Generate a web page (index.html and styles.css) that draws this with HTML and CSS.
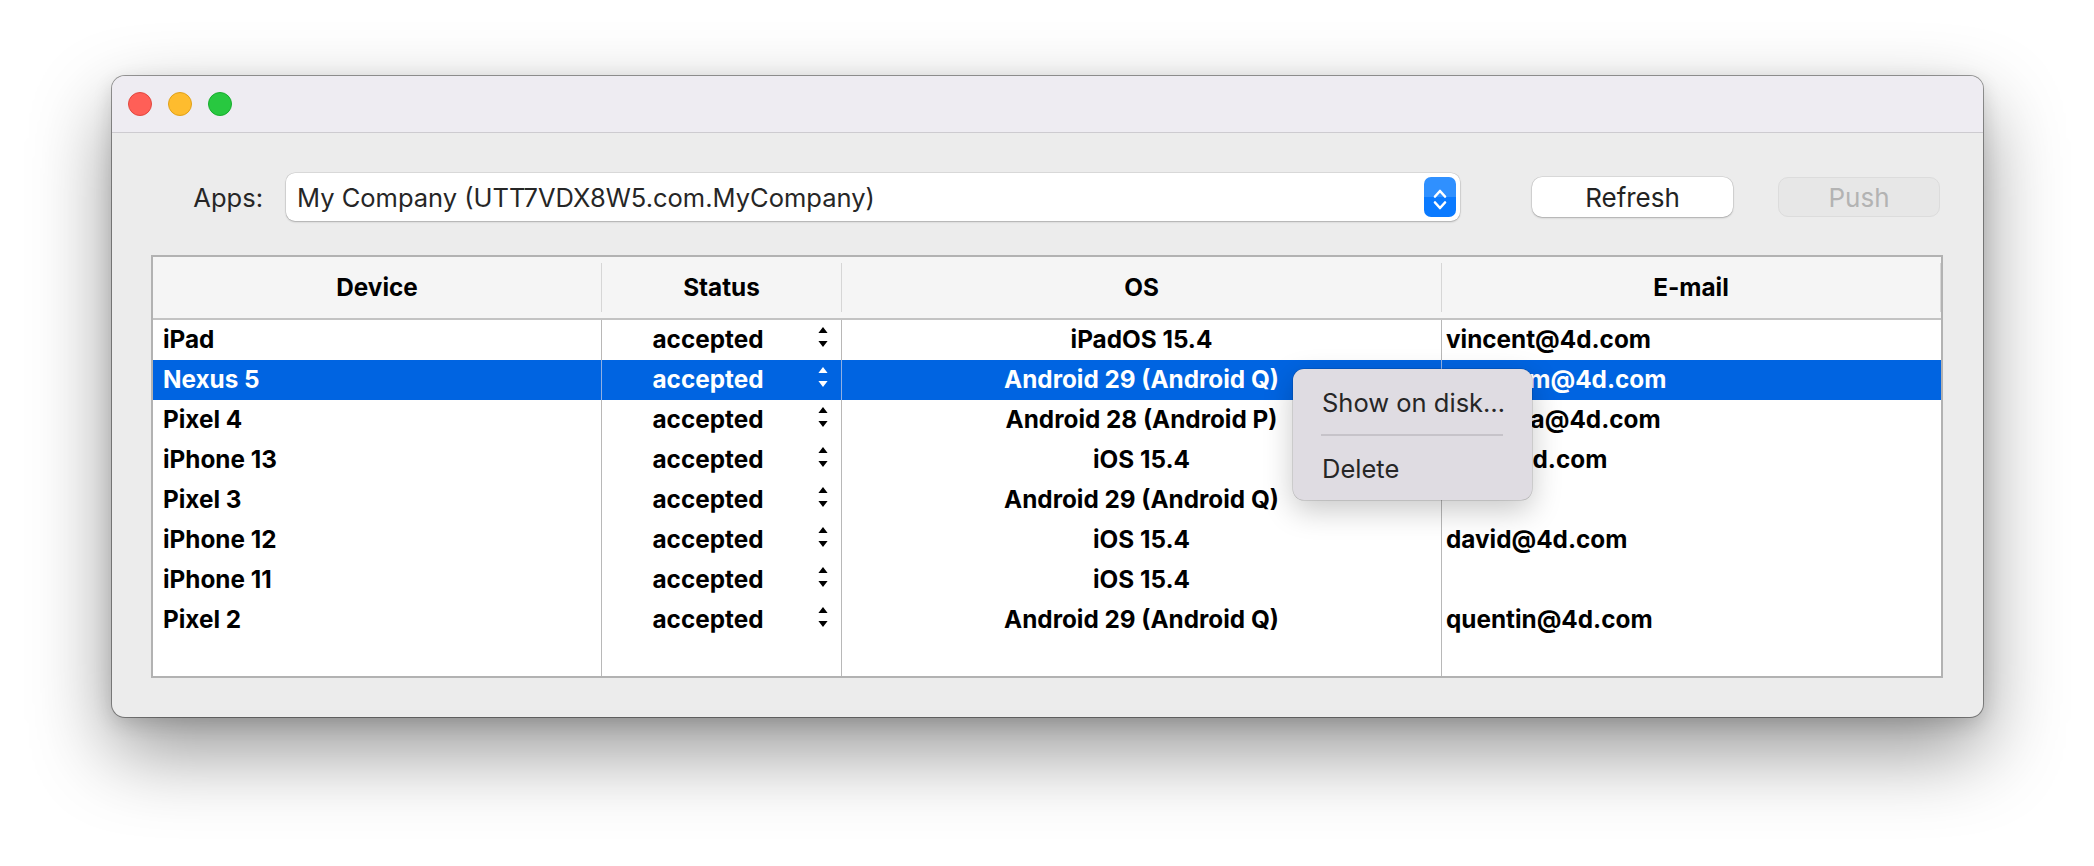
FILE: index.html
```html
<!DOCTYPE html>
<html>
<head>
<meta charset="utf-8">
<link rel="stylesheet" href="styles.css">
</head>
<body>
<div class="window">
  <div class="titlebar">
    <span class="light red"></span>
    <span class="light yellow"></span>
    <span class="light green"></span>
  </div>
  <div class="content">
    <div class="toolbar">
      <span class="apps-label">Apps:</span>
      <div class="popup">
        <span class="popup-text">My Company (UTT7VDX8W5.com.MyCompany)</span>
        <span class="stepper">
          <svg width="32" height="40" viewBox="0 0 32 40"><path d="M11 19.5 L16 14 L21 19.5 M11 25.5 L16 31 L21 25.5" fill="none" stroke="#fff" stroke-width="2.6" stroke-linecap="round" stroke-linejoin="round"/></svg>
        </span>
      </div>
      <button class="btn refresh">Refresh</button>
      <button class="btn push" disabled>Push</button>
    </div>
    <div class="table">
      <div class="thead">
        <div class="th">Device</div>
        <div class="th">Status</div>
        <div class="th">OS</div>
        <div class="th">E-mail</div>
      </div>
      <div class="tbody">
        <div class="tr"><div class="td dev">iPad</div><div class="td status"><span class="st">accepted</span><svg class="arr" width="10" height="40" viewBox="0 0 10 40"><path d="M5 7 L9.6 13 L0.4 13 Z M0.4 21 L9.6 21 L5 27 Z"/></svg></div><div class="td os">iPadOS 15.4</div><div class="td mail">vincent@4d.com</div></div>
        <div class="tr sel"><div class="td dev">Nexus 5</div><div class="td status"><span class="st">accepted</span><svg class="arr" width="10" height="40" viewBox="0 0 10 40"><path d="M5 7 L9.6 13 L0.4 13 Z M0.4 21 L9.6 21 L5 27 Z"/></svg></div><div class="td os">Android 29 (Android Q)</div><div class="td mail">abraham@4d.com</div></div>
        <div class="tr"><div class="td dev">Pixel 4</div><div class="td status"><span class="st">accepted</span><svg class="arr" width="10" height="40" viewBox="0 0 10 40"><path d="M5 7 L9.6 13 L0.4 13 Z M0.4 21 L9.6 21 L5 27 Z"/></svg></div><div class="td os">Android 28 (Android P)</div><div class="td mail">federica@4d.com</div></div>
        <div class="tr"><div class="td dev">iPhone 13</div><div class="td status"><span class="st">accepted</span><svg class="arr" width="10" height="40" viewBox="0 0 10 40"><path d="M5 7 L9.6 13 L0.4 13 Z M0.4 21 L9.6 21 L5 27 Z"/></svg></div><div class="td os">iOS 15.4</div><div class="td mail">eric@4d.com</div></div>
        <div class="tr"><div class="td dev">Pixel 3</div><div class="td status"><span class="st">accepted</span><svg class="arr" width="10" height="40" viewBox="0 0 10 40"><path d="M5 7 L9.6 13 L0.4 13 Z M0.4 21 L9.6 21 L5 27 Z"/></svg></div><div class="td os">Android 29 (Android Q)</div><div class="td mail"></div></div>
        <div class="tr"><div class="td dev">iPhone 12</div><div class="td status"><span class="st">accepted</span><svg class="arr" width="10" height="40" viewBox="0 0 10 40"><path d="M5 7 L9.6 13 L0.4 13 Z M0.4 21 L9.6 21 L5 27 Z"/></svg></div><div class="td os">iOS 15.4</div><div class="td mail">david@4d.com</div></div>
        <div class="tr"><div class="td dev">iPhone 11</div><div class="td status"><span class="st">accepted</span><svg class="arr" width="10" height="40" viewBox="0 0 10 40"><path d="M5 7 L9.6 13 L0.4 13 Z M0.4 21 L9.6 21 L5 27 Z"/></svg></div><div class="td os">iOS 15.4</div><div class="td mail"></div></div>
        <div class="tr"><div class="td dev">Pixel 2</div><div class="td status"><span class="st">accepted</span><svg class="arr" width="10" height="40" viewBox="0 0 10 40"><path d="M5 7 L9.6 13 L0.4 13 Z M0.4 21 L9.6 21 L5 27 Z"/></svg></div><div class="td os">Android 29 (Android Q)</div><div class="td mail">quentin@4d.com</div></div>
        <div class="tr filler"><div class="td"></div><div class="td"></div><div class="td"></div><div class="td"></div></div>
      </div>
    </div>
  </div>
  <div class="menu">
    <div class="mi">Show on disk…</div>
    <div class="msep"></div>
    <div class="mi">Delete</div>
  </div>
</div>
</body>
</html>
```
FILE: styles.css
```css
html, body {
  margin: 0;
  background: #ffffff;
}
html { height: 100%; }
body {
  min-height: 866px;
  box-sizing: border-box;
  padding: 76px 0 0 112px;
  font-family: "Inter", "Roboto", "DejaVu Sans", sans-serif;
}
.window {
  position: relative;
  width: 1871px;
  height: 641px;
  box-sizing: border-box;
  border-radius: 13px;
  background: #ececec;
  box-shadow: 0 0 0 1px rgba(0,0,0,0.38), 0 34px 80px rgba(0,0,0,0.42), 0 6px 20px rgba(0,0,0,0.14);
  display: flex;
  flex-direction: column;
}
.titlebar {
  height: 56px;
  flex: none;
  border-bottom: 1px solid #cdcbd0;
  background: #eeecf2;
  border-radius: 13px 13px 0 0;
  display: flex;
  align-items: center;
  gap: 16px;
  padding-left: 16px;
}
.light {
  width: 24px;
  height: 24px;
  border-radius: 50%;
  box-sizing: border-box;
}
.red { background: #ff5f57; border: 1px solid #e2473f; }
.yellow { background: #febc2e; border: 1px solid #e1a118; }
.green { background: #28c840; border: 1px solid #17ad2d; }

.content {
  flex: 1;
  padding: 40px 40px 39px 39px;
  display: flex;
  flex-direction: column;
}
.toolbar {
  display: flex;
  align-items: center;
  height: 48px;
}
.apps-label {
  width: 112px;
  margin-right: 23px;
  text-align: right;
  font-size: 25.5px;
  color: #262626;
}
.popup {
  width: 1174px;
  height: 48px;
  box-sizing: border-box;
  background: #fff;
  border-radius: 9px;
  box-shadow: 0 0 0 0.5px rgba(0,0,0,0.14), 0 1px 2px rgba(0,0,0,0.22);
  display: flex;
  align-items: center;
  padding: 0 4px 0 11px;
}
.popup-text {
  flex: 1;
  font-size: 25.5px;
  color: #262626;
  white-space: nowrap;
}
.stepper {
  width: 32px;
  height: 40px;
  border-radius: 7px;
  background: linear-gradient(#2f90ff 0 50%, #0a7aff 50% 100%);
  display: flex;
}
.btn {
  height: 40px;
  box-sizing: border-box;
  border-radius: 10px;
  font-family: inherit;
  font-size: 26px;
  padding: 0;
}
.refresh {
  width: 201px;
  margin-left: 72px;
  background: #fff;
  color: #232323;
  border: none;
  box-shadow: 0 0 0 0.5px rgba(0,0,0,0.14), 0 1px 2px rgba(0,0,0,0.22);
}
.push {
  width: 162px;
  margin-left: 45px;
  background: #e7e7e7;
  color: #b3b3b3;
  border: 1px solid #dcdcdc;
}

.table {
  margin-top: 34px;
  width: 1792px;
  height: 423px;
  box-sizing: border-box;
  border: 2px solid #b2b2b2;
  background: #fff;
  display: flex;
  flex-direction: column;
}
.thead, .tr {
  display: grid;
  grid-template-columns: 448px 240px 600px 500px;
}
.thead {
  height: 63px;
  box-sizing: border-box;
  border-bottom: 2px solid #c3c3c3;
  background: #f5f5f5;
  align-items: center;
}
.th {
  height: 49px;
  box-sizing: border-box;
  display: flex;
  align-items: center;
  justify-content: center;
  font-weight: 700;
  font-size: 24.3px;
  color: #000;
  padding-bottom: 2px;
}
.th + .th { border-left: 1px solid #d6d6d6; }
.th:last-child { border-right: 1px solid #d6d6d6; }

.tbody {
  flex: 1;
  display: flex;
  flex-direction: column;
}
.tr { height: 40px; }
.tr.filler { flex: 1; }
.td {
  box-sizing: border-box;
  display: flex;
  align-items: center;
  font-weight: 700;
  font-size: 24.3px;
  color: #000;
  white-space: nowrap;
  overflow: hidden;
  padding-bottom: 2px;
}
.td + .td { border-left: 1px solid #b8b8b8; }
.tr.sel { background: #0064e1; }
.tr.sel .td { color: #fff; }
.tr.sel .td + .td { border-left-color: #8fb0e4; }
.dev { padding-left: 10px; }
.status { padding-right: 13px; }
.st { flex: 1; text-align: center; }
.arr { flex: none; margin-left: 4px; fill: #000; margin-bottom: -2px; }
.tr.sel .arr { fill: #fff; }
.os { justify-content: center; }
.mail { padding-left: 4px; }

.menu {
  position: absolute;
  left: 1181px;
  top: 293px;
  width: 239px;
  height: 131px;
  box-sizing: border-box;
  padding: 13px 0 12px;
  background: #dfdce2;
  border-radius: 11px;
  box-shadow: 0 0 0 0.5px rgba(0,0,0,0.22), 0 10px 30px rgba(0,0,0,0.22);
}
.mi {
  height: 40px;
  padding-left: 29px;
  display: flex;
  align-items: center;
  font-size: 25.5px;
  color: #262626;
  white-space: nowrap;
}
.msep {
  height: 2px;
  margin: 12px 29px 12px 28px;
  background: #c6c3c9;
}
```
